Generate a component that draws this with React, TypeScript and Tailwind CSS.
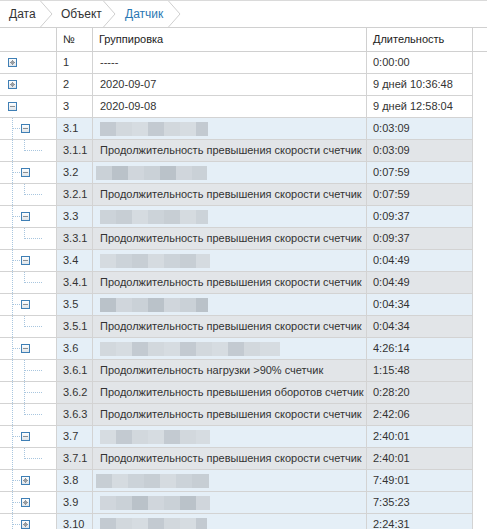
import React from "react";

type Kind = "top" | "l2" | "l3mid" | "l3last";
type Row = {
  kind: Kind;
  open?: boolean;
  no: string;
  name?: string;
  blur?: { start: number; blocks: [number, string][] };
  dur: string;
};

const shades = ["#c3cad1", "#d5dbe0", "#cad1d7", "#d2d8dd", "#ccd3d9", "#bac2c9", "#d6dce1", "#c7ced4", "#d0d6dc"];
const mk = (start: number, widths: number[], offset: number) => ({
  start,
  blocks: widths.map((w, i) => [w, shades[(i * 3 + offset) % shades.length]] as [number, string]),
});

const P = "Продолжительность превышения скорости счетчик";

const rows: Row[] = [
  { kind: "top", no: "1", name: "-----", dur: "0:00:00" },
  { kind: "top", no: "2", name: "2020-09-07", dur: "9 дней 10:36:48" },
  { kind: "top", open: true, no: "3", name: "2020-09-08", dur: "9 дней 12:58:04" },
  { kind: "l2", open: true, no: "3.1", blur: mk(100, [16, 16, 16, 16, 16, 16, 12], 0), dur: "0:03:09" },
  { kind: "l3last", no: "3.1.1", name: P, dur: "0:03:09" },
  { kind: "l2", open: true, no: "3.2", blur: mk(96, [16, 16, 16, 16, 16, 16, 15], 2), dur: "0:07:59" },
  { kind: "l3last", no: "3.2.1", name: P, dur: "0:07:59" },
  { kind: "l2", open: true, no: "3.3", blur: mk(100, [16, 16, 16, 16, 16, 16, 12], 4), dur: "0:09:37" },
  { kind: "l3last", no: "3.3.1", name: P, dur: "0:09:37" },
  { kind: "l2", open: true, no: "3.4", blur: mk(100, [16, 16, 16, 16, 16, 16, 14], 1), dur: "0:04:49" },
  { kind: "l3last", no: "3.4.1", name: P, dur: "0:04:49" },
  { kind: "l2", open: true, no: "3.5", blur: mk(100, [16, 16, 16, 16, 16, 16, 12], 5), dur: "0:04:34" },
  { kind: "l3last", no: "3.5.1", name: P, dur: "0:04:34" },
  { kind: "l2", open: true, no: "3.6", blur: mk(100, [16, 16, 16, 16, 16, 16, 16, 16, 16, 16, 20], 3), dur: "4:26:14" },
  { kind: "l3mid", no: "3.6.1", name: "Продолжительность нагрузки >90% счетчик", dur: "1:15:48" },
  { kind: "l3mid", no: "3.6.2", name: "Продолжительность превышения оборотов счетчик", dur: "0:28:20" },
  { kind: "l3last", no: "3.6.3", name: P, dur: "2:42:06" },
  { kind: "l2", open: true, no: "3.7", blur: mk(100, [16, 16, 16, 16, 16, 16, 14], 6), dur: "2:40:01" },
  { kind: "l3last", no: "3.7.1", name: P, dur: "2:40:01" },
  { kind: "l2", no: "3.8", blur: mk(96, [16, 16, 16, 16, 16, 16, 17], 7), dur: "7:49:01" },
  { kind: "l2", no: "3.9", blur: mk(100, [16, 16, 16, 16, 16, 16, 14], 8), dur: "7:35:23" },
  { kind: "l2", no: "3.10", blur: mk(100, [16, 16, 16, 16, 16, 16, 11], 0), dur: "2:24:31" },
];

const LINE = "#a8c6df";

function Box({ x, open }: { x: number; open?: boolean }) {
  return (
    <g>
      <defs>
        <linearGradient id="bxg" x1="0" y1="0" x2="0" y2="1">
          <stop offset="0" stopColor="#ffffff" />
          <stop offset="1" stopColor="#dde3e8" />
        </linearGradient>
      </defs>
      <rect x={x + 0.5} y={6.5} width={8} height={8} fill="url(#bxg)" stroke="#3f7fb5" />
      <rect x={x + 2} y={10} width={5} height={1} fill="#8a8f94" />
      {!open && <rect x={x + 4} y={8} width={1} height={5} fill="#8a8f94" />}
      {!open && <rect x={x + 3} y={9} width={3} height={3} fill="#9a9fa4" />}
    </g>
  );
}

function TreeCell({ kind, open }: { kind: Kind; open?: boolean }) {
  return (
    <svg width={56} height={21} viewBox="0 0 56 21" className="block">
      {kind === "top" && <Box x={8} open={open} />}
      {kind === "l2" && (
        <>
          <line x1={12.5} y1={0} x2={12.5} y2={21} stroke={LINE} strokeDasharray="1 1" />
          <line x1={13} y1={10.5} x2={21} y2={10.5} stroke={LINE} strokeDasharray="1 1" />
          <Box x={21} open={open} />
        </>
      )}
      {(kind === "l3mid" || kind === "l3last") && (
        <>
          <line x1={12.5} y1={0} x2={12.5} y2={21} stroke={LINE} strokeDasharray="1 1" />
          <line x1={24.5} y1={0} x2={24.5} y2={kind === "l3mid" ? 21 : 11} stroke={LINE} strokeDasharray="1 1" />
          <line x1={25} y1={10.5} x2={42} y2={10.5} stroke={LINE} strokeDasharray="1 1" />
        </>
      )}
    </svg>
  );
}

function Chevron() {
  return (
    <svg width={13} height={26} viewBox="0 0 13 26" className="block shrink-0">
      <polyline points="0.5,0 12,13 0.5,26" fill="none" stroke="#cfcfcf" strokeWidth={1} />
    </svg>
  );
}

export default function App() {
  return (
    <div
      className="w-[487px] h-[529px] overflow-hidden bg-white text-[11px] text-[#333]"
      style={{ fontFamily: '"Liberation Sans", Arial, sans-serif' }}
    >
      {/* breadcrumb */}
      <div className="flex items-center h-[27px] border-t border-[#dadada] text-[12px]">
        <span className="w-[40px] pl-[9px]">Дата</span>
        <Chevron />
        <span className="w-[50px] pl-[8px]">Объект</span>
        <Chevron />
        <span className="w-[52px] pl-[9px] text-[#2a77b3]">Датчик</span>
        <Chevron />
      </div>
      {/* header */}
      <div className="flex h-[25px] border-y border-[#d0d0d0] text-[#222]">
        <div className="w-[57px] border-r border-[#d0d0d0]" />
        <div className="w-[36px] border-r border-[#d0d0d0] pl-[6px] flex items-center">№</div>
        <div className="w-[274px] border-r border-[#d0d0d0] pl-[6px] flex items-center">Группировка</div>
        <div className="w-[106px] border-r border-[#d0d0d0] pl-[6px] flex items-center">Длительность</div>
        <div className="flex-1" />
      </div>
      {/* body */}
      <div className="w-[473px]">
        {rows.map((r, i) => {
          const bg =
            r.kind === "top" ? "bg-white" : r.kind === "l2" ? "bg-[#e5eff7]" : "bg-[#e2e5e8]";
          return (
            <div key={i} className="flex h-[22px] border-b border-[#d3d3d3]">
              <div className="w-[57px] border-r border-[#d3d3d3] bg-white">
                <TreeCell kind={r.kind} open={r.open} />
              </div>
              <div className={`w-[36px] border-r border-[#d3d3d3] pl-[6px] flex items-center ${bg}`}>{r.no}</div>
              <div className={`w-[274px] border-r border-[#d3d3d3] flex items-center whitespace-nowrap overflow-hidden ${bg}`}>
                {r.blur ? (
                  <div className="flex h-[14px]" style={{ marginLeft: r.blur.start - 93 }}>
                    {r.blur.blocks.map(([w, c], j) => (
                      <div key={j} className="h-full" style={{ width: w, background: c }} />
                    ))}
                  </div>
                ) : (
                  <span className="pl-[7px]">{r.name}</span>
                )}
              </div>
              <div className={`w-[106px] border-r border-[#d3d3d3] pl-[6px] flex items-center ${bg}`}>{r.dur}</div>
            </div>
          );
        })}
      </div>
    </div>
  );
}
